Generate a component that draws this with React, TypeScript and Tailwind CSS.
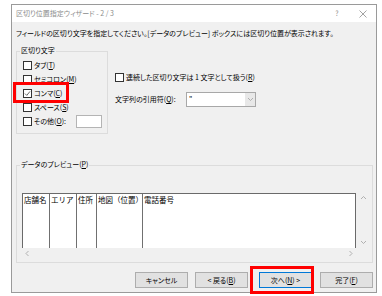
import type { ReactNode } from 'react'

const jp = "font-['Noto_Sans_CJK_JP',sans-serif] [font-feature-settings:'palt']"

function Key({ k }: { k: string }) {
  return (
    <>
      (<span className="underline decoration-[0.5px] underline-offset-[1px]">{k}</span>)
    </>
  )
}

function Box({ checked = false }: { checked?: boolean }) {
  return (
    <span className="flex h-[9px] w-[9px] shrink-0 items-center justify-center border border-[#333] bg-white">
      {checked ? (
        <svg width="7" height="7" viewBox="0 0 7 7">
          <path d="M1 3.6 L2.8 5.4 L6 1.4" fill="none" stroke="#555" strokeWidth="0.9" />
        </svg>
      ) : null}
    </span>
  )
}

function Row({ checked, children }: { checked?: boolean; children: ReactNode }) {
  return (
    <div className="flex h-[14px] items-center">
      <Box checked={checked} />
      <span className="ml-[2px] whitespace-nowrap">{children}</span>
    </div>
  )
}

function Chevron({ dir }: { dir: 'up' | 'down' | 'left' | 'right' }) {
  const d = {
    up: 'M1 4 L3.5 1.5 L6 4',
    down: 'M1 2 L3.5 4.5 L6 2',
    left: 'M4.5 1 L2 3.5 L4.5 6',
    right: 'M2.5 1 L5 3.5 L2.5 6'
  }[dir]
  return (
    <svg width="7" height="7" viewBox="0 0 7 7">
      <path d={d} fill="none" stroke="#a8a8a8" strokeWidth="0.9" />
    </svg>
  )
}

function Button({ children, primary = false }: { children: ReactNode; primary?: boolean }) {
  return (
    <div
      className={`flex h-[16px] w-[53px] items-center justify-center border bg-[#e1e1e1] text-[7px] leading-none ${
        primary ? 'border-[#0078d7]' : 'border-[#adadad]'
      }`}
    >
      {children}
    </div>
  )
}

const columns = [
  { label: '店舗名', w: 'w-[27px] border-r' },
  { label: 'エリア', w: 'w-[27px] border-r' },
  { label: '住所', w: 'w-[20px] border-r' },
  { label: '地図（位置）', w: 'w-[46px] border-r' },
  { label: '電話番号', w: 'flex-1' }
]

export default function App() {
  return (
    <div className={`relative h-[296px] w-[382px] bg-white pl-[11px] pt-[4px] text-[7px] leading-none text-black ${jp}`}>
      <div className="flex h-[289px] w-[366px] flex-col border border-[#9a9a9a] bg-[#f0f0f0]">
        {/* title bar */}
        <div className="flex h-[17px] items-center bg-white pl-[4px] text-[#8c8c8c]">
          <span>区切り位置指定ウィザード - 2 / 3</span>
          <span className="ml-auto w-[26px] text-center">?</span>
          <span className="flex w-[26px] justify-center">
            <svg width="8" height="8" viewBox="0 0 8 8">
              <path d="M0.5 0.5 L7.5 7.5 M7.5 0.5 L0.5 7.5" stroke="#8c8c8c" strokeWidth="0.8" />
            </svg>
          </span>
        </div>

        <div className="flex flex-col px-[3px] pl-[4px]">
          <div className="mt-[6px] flex h-[10px] items-center whitespace-nowrap">
            フィールドの区切り文字を指定してください。[データのプレビュー] ボックスには区切り位置が表示されます。
          </div>

          <div className="mt-[13px] flex">
            <div className="relative h-[83px] w-[92px] border border-[#dcdcdc] pl-[6px] pt-[6px]">
              <span className="absolute -top-[5px] left-[3px] bg-[#f0f0f0] px-[1px]">区切り文字</span>
              <Row>
                タブ<Key k="T" />
              </Row>
              <Row>
                セミコロン<Key k="M" />
              </Row>
              <Row checked>
                コンマ<Key k="C" />
              </Row>
              <Row>
                スペース<Key k="S" />
              </Row>
              <div className="flex h-[14px] items-center">
                <Box />
                <span className="ml-[2px] w-[42px] whitespace-nowrap">
                  その他<Key k="O" />:
                </span>
                <span className="h-[13px] w-[26px] border border-[#b4b4b4] bg-white" />
              </div>
            </div>

            <div className="ml-[7px] flex flex-col pt-[19px]">
              <Row>
                連続した区切り文字は 1 文字として扱う<Key k="R" />
              </Row>
              <div className="mt-[8px] flex h-[15px] items-center">
                <span className="w-[71px] whitespace-nowrap">
                  文字列の引用符<Key k="Q" />:
                </span>
                <div className="flex h-[15px] w-[70px] border border-[#a8a8a8] bg-white">
                  <span className="flex-1 pl-[2px] pt-[2px]">"</span>
                  <span className="flex w-[10px] items-center justify-center bg-[#e8e8e8]">
                    <Chevron dir="down" />
                  </span>
                </div>
              </div>
            </div>
          </div>

          <div className="relative mt-[31px] flex h-[98px] w-[357px] flex-col border border-[#dcdcdc] pl-[5px] pt-[27px]">
            <span className="absolute -top-[5px] left-[3px] bg-[#f0f0f0] px-[1px]">
              データのプレビュー<Key k="P" />
            </span>
            <div className="flex h-[55px]">
              <div className="flex w-[334px] border-l border-r border-t border-[#6a6a6a] bg-white">
                {columns.map((c) => (
                  <div
                    key={c.label}
                    className={`${c.w} h-full border-[#707070] pl-[1px] pt-[2px] font-['Noto_Sans_CJK_JP',monospace] text-[7.5px] [font-feature-settings:normal]`}
                  >
                    <span className="whitespace-nowrap">{c.label}</span>
                  </div>
                ))}
              </div>
              <div className="flex w-[15px] flex-col items-center justify-between py-[2px]">
                <Chevron dir="up" />
                <Chevron dir="down" />
              </div>
            </div>
            <div className="flex h-[11px] w-[334px] items-center justify-between px-[2px]">
              <Chevron dir="left" />
              <Chevron dir="right" />
            </div>
          </div>

          <div className="mt-[9px] flex justify-end pr-[0px]">
            <Button>キャンセル</Button>
            <div className="ml-[7px]">
              <Button>
                &lt; 戻る<Key k="B" />
              </Button>
            </div>
            <div className="ml-[11px]">
              <Button primary>
                次へ<Key k="N" /> &gt;
              </Button>
            </div>
            <div className="ml-[8px]">
              <Button>
                完了<Key k="F" />
              </Button>
            </div>
          </div>
        </div>
      </div>

      {/* red annotation boxes */}
      <div className="absolute left-[13px] top-[82px] h-[21px] w-[56px] border-[3px] border-[#f00]" />
      <div className="absolute left-[250px] top-[266px] h-[28px] w-[64px] border-[3px] border-[#f00]" />
    </div>
  )
}
